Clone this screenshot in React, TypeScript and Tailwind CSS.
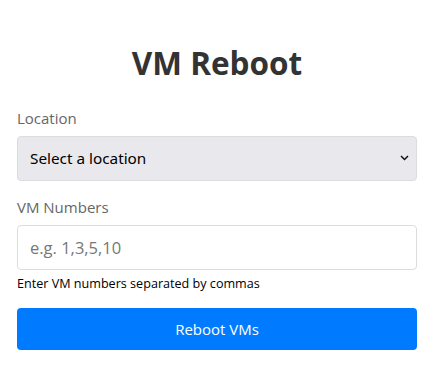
import { useState } from "react";

export default function App() {
  const [location, setLocation] = useState("");
  const [vms, setVms] = useState("");

  return (
    <div className="min-h-screen bg-white font-['Open_Sans',sans-serif] text-[#212529]">
      <div className="w-[400px] ml-[17px] pt-[44px]">
        <h1 className="text-center text-[31.5px] font-bold leading-[1.2] text-[#333] mb-[24px]">
          VM Reboot
        </h1>

        <div className="flex flex-col">
          <label className="text-[15px] text-[#666] leading-[24px] mb-[6px]">Location</label>
          <div className="relative">
            <select
              value={location}
              onChange={(e) => setLocation(e.target.value)}
              className="h-[45px] w-full appearance-none rounded-[4px] border border-[#dcdce0] bg-[#e9e9ed] px-[12px] text-[15.3px] text-black font-['Noto_Sans',sans-serif]"
            >
              <option value="">Select a location</option>
              <option value="east">East</option>
              <option value="west">West</option>
            </select>
            <svg
              className="pointer-events-none absolute right-[8px] top-1/2 -translate-y-1/2"
              width="9"
              height="6"
              viewBox="0 0 9 6"
              fill="none"
            >
              <path d="M1 1l3.5 3.5L8 1" stroke="#111" strokeWidth="1.5" />
            </svg>
          </div>

          <label className="text-[15px] text-[#666] leading-[24px] mt-[14px] mb-[6px]">VM Numbers</label>
          <input
            value={vms}
            onChange={(e) => setVms(e.target.value)}
            placeholder="e.g. 1,3,5,10"
            className="h-[45px] w-full rounded-[4px] border border-[#ddd] bg-white px-[12px] text-[16.5px] placeholder:text-[#777] outline-none"
          />
          <p className="text-[12.6px] text-black leading-[18px] mt-[5px]">
            Enter VM numbers separated by commas
          </p>

          <button className="mt-[15px] h-[42px] w-full rounded-[4px] bg-[#007bff] text-[15px] text-white">
            Reboot VMs
          </button>
        </div>
      </div>
    </div>
  );
}
